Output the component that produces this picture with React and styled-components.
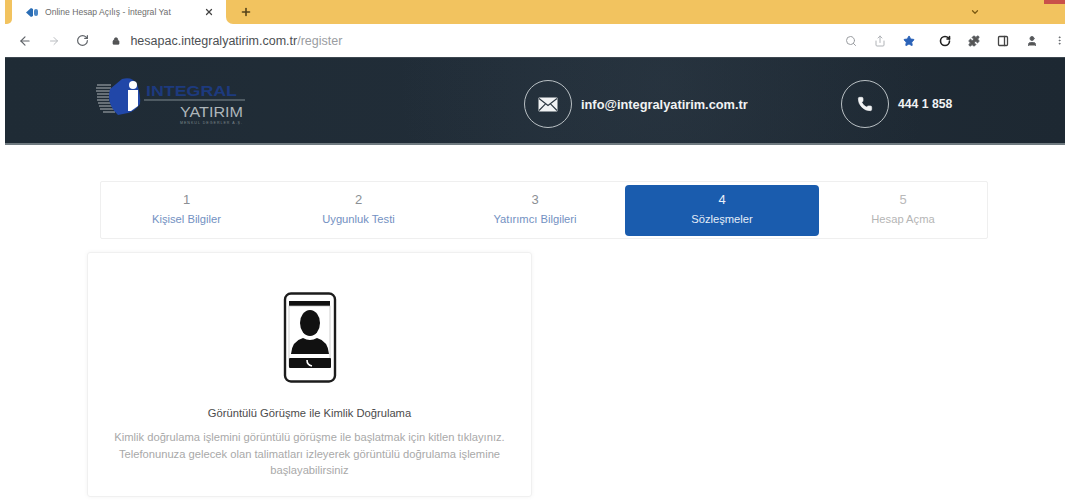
import React from "react";
import styled, { createGlobalStyle } from "styled-components";
import { ArrowLeft, ArrowRight, RotateCw, Lock, X, Plus, ChevronDown, Search, Share, Star, Puzzle, PanelRight, User, EllipsisVertical, Phone } from "lucide-react";

const Global = createGlobalStyle`
  html, body { margin: 0; padding: 0; background: #fff; }
  body { font-family: "Liberation Sans", Arial, sans-serif; width: 1065px; height: 501px; overflow: hidden; }
`;

const Strip = styled.div`
  height: 24px;
  display: flex;
  align-items: stretch;
  position: relative;
  padding-left: 5px;
`;
const StripEdge = styled.div`
  width: 7px;
  background: #f2c35f;
  border-radius: 0 0 5px 0;
`;
const Tab = styled.div`
  width: 214px;
  padding: 0 12px 0 14px;
  box-sizing: border-box;
  background: #fff;
  display: flex;
  align-items: center;
  gap: 6px;
  color: #6d6d6d;
  font-size: 8.6px;
`;
const TabTitle = styled.span`
  flex: 1;
  white-space: nowrap;
  overflow: hidden;
`;
const StripRest = styled.div`
  flex: 1;
  background: #f2c35f;
  border-radius: 0 0 0 7px;
  display: flex;
  align-items: center;
  padding-left: 14px;
`;
const StripEnd = styled.div`
  margin-left: auto;
  width: 95px;
  display: flex;
  align-items: center;
  color: #7b5a12;
`;
const WindowClose = styled.div`
  position: absolute;
  right: 0;
  top: 0;
  width: 21px;
  height: 4px;
  background: #c9504a;
`;
const Toolbar = styled.div`
  height: 33px;
  background: #fff;
  display: flex;
  align-items: center;
  padding: 0 0 0 18px;
  color: #5f6368;
`;
const NavGroup = styled.div`
  display: flex;
  align-items: center;
  gap: 16px;
  width: 95px;
`;
const Address = styled.div`
  display: flex;
  align-items: center;
  gap: 10px;
  font-size: 12.5px;
  color: #4c4f53;
  width: 737px;
  white-space: nowrap;
`;
const AddressPath = styled.span`
  color: #9a9da1;
`;
const ToolIcons = styled.div`
  display: flex;
  align-items: center;
  gap: 17px;
`;
const ExtensionGroup = styled.div`
  display: flex;
  align-items: center;
  gap: 17px;
  margin-left: 7px;
`;
const Header = styled.header`
  margin-left: 5px;
  height: 88px;
  box-sizing: border-box;
  background:
    radial-gradient(circle at 62% 30%, rgba(70, 85, 100, 0.18), transparent 40%),
    linear-gradient(90deg, #1f2b35, #212d38 50%, #1d2832);
  border-top: 1px solid #3d4750;
  border-bottom: 2px solid #6f7a80;
  display: flex;
  align-items: center;
  color: #f1f3f4;
`;
const LogoSlot = styled.div`
  width: 519px;
  padding-left: 91px;
  box-sizing: border-box;
  display: flex;
  align-self: flex-start;
  margin-top: 18px;
`;
const Contact = styled.div`
  display: flex;
  align-items: center;
  gap: 9px;
  width: ${(p) => p.$width}px;
  font-weight: bold;
  font-size: ${(p) => p.$size}px;
  white-space: nowrap;
  margin-top: 7px;
`;
const Ring = styled.div`
  width: 48px;
  height: 48px;
  flex: none;
  box-sizing: border-box;
  border: 1.5px solid #b9c0c4;
  border-radius: 50%;
  display: flex;
  align-items: center;
  justify-content: center;
`;
const Steps = styled.nav`
  margin: 36px 0 0 100px;
  width: 888px;
  height: 58px;
  box-sizing: border-box;
  border: 1px solid #efefef;
  border-radius: 2px;
  display: grid;
  grid-template-columns: 171px 173px 180px 194px 168px;
  align-items: stretch;
`;
const Step = styled.div`
  margin: 3px 0 2px;
  padding-bottom: 2px;
  box-sizing: border-box;
  border-radius: 4px;
  background: ${(p) => (p.$active ? "#1a5cae" : "transparent")};
  display: flex;
  flex-direction: column;
  align-items: center;
  justify-content: center;
  gap: 6px;
`;
const StepNumber = styled.div`
  font-size: 13px;
  line-height: 14px;
  color: ${(p) => (p.$active ? "#e8f0fa" : p.$muted ? "#b9b9b9" : "#8b8f94")};
`;
const StepLabel = styled.div`
  font-size: 11.2px;
  line-height: 13px;
  color: ${(p) => (p.$active ? "#e4edf8" : p.$muted ? "#b5b5b5" : "#7391c2")};
`;
const Card = styled.section`
  margin: 13px 0 0 87px;
  width: 445px;
  height: 245px;
  box-sizing: border-box;
  border: 1px solid #f0f0f0;
  border-radius: 3px;
  box-shadow: 0 0 4px rgba(0, 0, 0, 0.05);
  padding: 39px 10px 0;
  display: flex;
  flex-direction: column;
  align-items: center;
  text-align: center;
`;
const CardTitle = styled.h2`
  margin: 23px 0 0;
  font-size: 11.2px;
  line-height: 14px;
  font-weight: normal;
  color: #4b4b4b;
`;
const CardText = styled.p`
  margin: 9px 0 0;
  font-size: 11.2px;
  line-height: 16.5px;
  color: #a9a9a9;
`;

// Brand mark with speed lines, blue globe and the white "i"
const Logo = () => (
  <svg width="150" height="56" viewBox="0 0 150 56">
    <g stroke="#aeb4b8" strokeWidth="1.2">
      <path d="M1 9h14M0 12h15M0 15h15M1 18h13M1 21h12M1 24h12M2 27h13M3 30h14M4 33h14M7 36h12" />
    </g>
    <path d="M14 13 L26 3 Q36 0 41 8 Q45 20 44 28 Q38 36 32 37 L22 39 Q10 28 14 13Z" fill="#2147a8" />
    <circle cx="37" cy="9" r="4" fill="#fff" />
    <path d="M32 14h10v16l-7 5h-3z" fill="#fff" />
    <text x="50" y="20" fontFamily="'Liberation Sans', sans-serif" fontSize="15" fontWeight="bold" fill="#1d3a7e" textLength="91" lengthAdjust="spacingAndGlyphs">INTEGRAL</text>
    <path d="M48 24h101" stroke="#7f8a90" strokeWidth="1" />
    <text x="84" y="41" fontFamily="'Liberation Sans', sans-serif" fontSize="15" fill="#aeb6ba" textLength="63" lengthAdjust="spacingAndGlyphs">YATIRIM</text>
    <text x="84" y="48" fontFamily="'Liberation Sans', sans-serif" fontSize="3.6" fill="#7e888d" textLength="62">MENKUL DEĞERLER A.Ş.</text>
  </svg>
);

// Closed envelope with its fold lines cut out of the white body
const Envelope = () => (
  <svg width="20" height="15" viewBox="0 0 20 15">
    <rect x="0.5" y="0.5" width="19" height="14" rx="1" fill="#f1f3f4" />
    <path d="M1 1.5L10 8.5L19 1.5M1 13.5L7.5 6.8M19 13.5L12.5 6.8" stroke="#2a3640" strokeWidth="1.1" fill="none" />
  </svg>
);

// Phone showing the caller's silhouette, used for the video identity step
const VideoCallPhone = () => (
  <svg width="54" height="91" viewBox="0 0 54 91">
    <rect x="2" y="1.5" width="50" height="88" rx="6" fill="#fff" stroke="#1c1c1c" strokeWidth="2.4" />
    <rect x="6" y="9" width="41" height="5" fill="#111" />
    <rect x="6" y="14" width="41" height="60" fill="none" stroke="#bbb" strokeWidth="0.7" />
    <ellipse cx="27" cy="31" rx="10" ry="13" fill="#111" />
    <path d="M8 62 Q9 49 20 46 Q27 50 34 46 Q45 49 46 62Z" fill="#111" />
    <rect x="6" y="66" width="42" height="10" rx="1" fill="#111" />
    <path d="M24 68 Q24 73 29 74" stroke="#fff" strokeWidth="1.6" fill="none" />
  </svg>
);

const steps = [
  ["1", "Kişisel Bilgiler"],
  ["2", "Uygunluk Testi"],
  ["3", "Yatırımcı Bilgileri"],
  ["4", "Sözleşmeler"],
  ["5", "Hesap Açma"],
];

export default function App() {
  return (
    <>
      <Global />
      <Strip>
        <StripEdge />
        <Tab>
          <svg width="13" height="11" viewBox="0 0 13 11">
            <path d="M0 5.5L5 1l2 1v7L5 10z" fill="#2a6db5" />
            <rect x="8" y="2" width="4" height="7" rx="2" fill="#4a86c5" />
          </svg>
          <TabTitle>Online Hesap Açılış - İntegral Yat</TabTitle>
          <X size={10} strokeWidth={3} color="#444" />
        </Tab>
        <StripRest>
          <Plus size={12} strokeWidth={3.2} color="#55431a" />
          <StripEnd>
            <ChevronDown size={10} strokeWidth={3} />
          </StripEnd>
        </StripRest>
        <WindowClose />
      </Strip>
      <Toolbar>
        <NavGroup>
          <ArrowLeft size={14} strokeWidth={2} />
          <ArrowRight size={12} strokeWidth={2} color="#b9bcc0" />
          <RotateCw size={13} strokeWidth={2.2} />
        </NavGroup>
        <Address>
          <Lock size={8} fill="#555" strokeWidth={2} />
          <span>
            hesapac.integralyatirim.com.tr<AddressPath>/register</AddressPath>
          </span>
        </Address>
        <ToolIcons>
          <Search size={12} strokeWidth={2} color="#9a9da1" />
          <Share size={12} strokeWidth={2} color="#b0b3b7" />
          <Star size={12} fill="#2a62b8" color="#2a62b8" />
          <ExtensionGroup>
            <RotateCw size={12} strokeWidth={3.2} color="#222" />
            <Puzzle size={12} fill="#555" />
            <PanelRight size={12} strokeWidth={2.6} color="#444" />
            <User size={12} fill="#555" />
            <EllipsisVertical size={11} strokeWidth={2} style={{ marginLeft: -1 }} />
          </ExtensionGroup>
        </ToolIcons>
      </Toolbar>
      <Header>
        <LogoSlot>
          <Logo />
        </LogoSlot>
        <Contact $width={317} $size={12.8}>
          <Ring>
            <Envelope />
          </Ring>
          info@integralyatirim.com.tr
        </Contact>
        <Contact $width={130} $size={12.2}>
          <Ring>
            <Phone size={16} fill="#f1f3f4" strokeWidth={1} />
          </Ring>
          444 1 858
        </Contact>
      </Header>
      <Steps>
        {steps.map(([n, label], i) => (
          <Step key={n} $active={i === 3}>
            <StepNumber $active={i === 3} $muted={i === 4}>{n}</StepNumber>
            <StepLabel $active={i === 3} $muted={i === 4}>{label}</StepLabel>
          </Step>
        ))}
      </Steps>
      <Card>
        <VideoCallPhone />
        <CardTitle>Görüntülü Görüşme ile Kimlik Doğrulama</CardTitle>
        <CardText>
          Kimlik doğrulama işlemini görüntülü görüşme ile başlatmak için kitlen tıklayınız.
          <br />
          Telefonunuza gelecek olan talimatları izleyerek görüntülü doğrulama işlemine
          <br />
          başlayabilirsiniz
        </CardText>
      </Card>
    </>
  );
}
